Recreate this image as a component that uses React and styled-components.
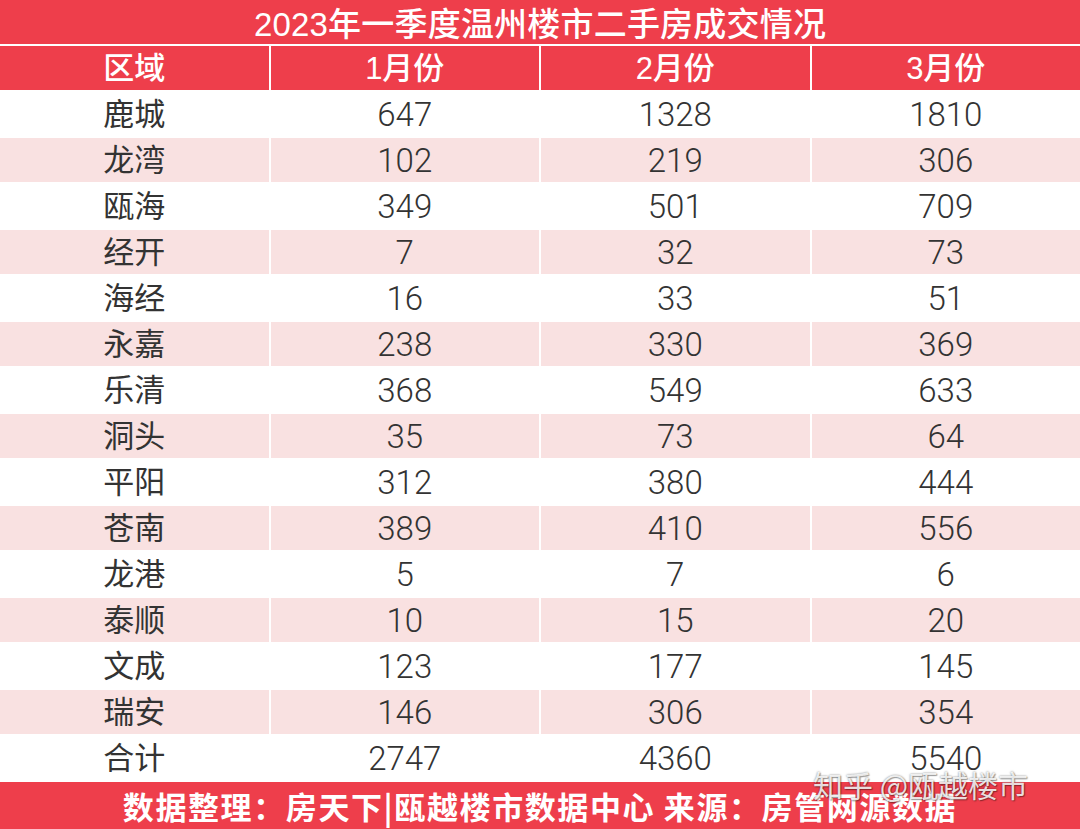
import React from "react";
import styled, { createGlobalStyle } from "styled-components";

const Global = createGlobalStyle`
  html, body { margin: 0; padding: 0; background: #fff; }
  body { font-family: "Noto Sans CJK SC", "Noto Sans", sans-serif; }
`;

const RED = "#ee3e4b";
const PINK = "#f9e1e1";

const Page = styled.div`
  position: relative;
  width: 1080px;
  height: 829px;
  display: flex;
  flex-direction: column;
  gap: 2px;
  background: #fff;
  overflow: hidden;
`;

const Title = styled.div`
  height: 44px;
  background: ${RED};
  color: #fff;
  display: flex;
  align-items: center;
  justify-content: center;
  font-family: "Liberation Sans", "Noto Sans CJK SC", sans-serif;
  font-size: 33px;
  font-weight: 500;
  letter-spacing: 0.2px;
`;

const Row = styled.div`
  height: 44px;
  display: grid;
  grid-template-columns: repeat(4, 1fr);
  column-gap: 2px;
`;

const Cell = styled.div`
  display: flex;
  align-items: center;
  justify-content: center;
  background: ${(p) => (p.$head ? RED : p.$alt ? PINK : "#fff")};
  color: ${(p) => (p.$head ? "#fff" : "#333")};
  font-family: ${(p) =>
    p.$num
      ? `Roboto, "Liberation Sans", sans-serif`
      : `"Liberation Sans", "Noto Sans CJK SC", sans-serif`};
  font-size: ${(p) => (p.$num ? "33px" : "31px")};
  font-weight: ${(p) => (p.$head ? 500 : p.$num ? 300 : 400)};
  line-height: 1;
`;

const Footer = styled.div`
  flex: 1;
  background: ${RED};
  color: #fff;
  display: flex;
  align-items: center;
  justify-content: center;
  font-family: "Noto Sans CJK SC", sans-serif;
  font-size: 31px;
  font-weight: 700;
  letter-spacing: 1.6px;
`;

const Watermark = styled.div`
  position: absolute;
  left: 813px;
  top: 762px;
  font-family: "Noto Sans CJK SC", sans-serif;
  font-size: 30px;
  color: rgba(255, 255, 255, 0.85);
  text-shadow: 0 0 2px rgba(0, 0, 0, 0.5), 1px 1px 1px rgba(0, 0, 0, 0.3);
  white-space: nowrap;
`;

const data = [
  ["鹿城", 647, 1328, 1810],
  ["龙湾", 102, 219, 306],
  ["瓯海", 349, 501, 709],
  ["经开", 7, 32, 73],
  ["海经", 16, 33, 51],
  ["永嘉", 238, 330, 369],
  ["乐清", 368, 549, 633],
  ["洞头", 35, 73, 64],
  ["平阳", 312, 380, 444],
  ["苍南", 389, 410, 556],
  ["龙港", 5, 7, 6],
  ["泰顺", 10, 15, 20],
  ["文成", 123, 177, 145],
  ["瑞安", 146, 306, 354],
  ["合计", 2747, 4360, 5540],
];

export default function App() {
  return (
    <>
      <Global />
      <Page>
        <Title>2023年一季度温州楼市二手房成交情况</Title>
        <Row>
          <Cell $head>区域</Cell>
          <Cell $head>1月份</Cell>
          <Cell $head>2月份</Cell>
          <Cell $head>3月份</Cell>
        </Row>
        {data.map((r, i) => (
          <Row key={r[0]}>
            <Cell $alt={i % 2 === 1}>{r[0]}</Cell>
            <Cell $alt={i % 2 === 1} $num>{r[1]}</Cell>
            <Cell $alt={i % 2 === 1} $num>{r[2]}</Cell>
            <Cell $alt={i % 2 === 1} $num>{r[3]}</Cell>
          </Row>
        ))}
        <Footer>数据整理：房天下|瓯越楼市数据中心 来源：房管网源数据</Footer>
        <Watermark>知乎 @瓯越楼市</Watermark>
      </Page>
    </>
  );
}
